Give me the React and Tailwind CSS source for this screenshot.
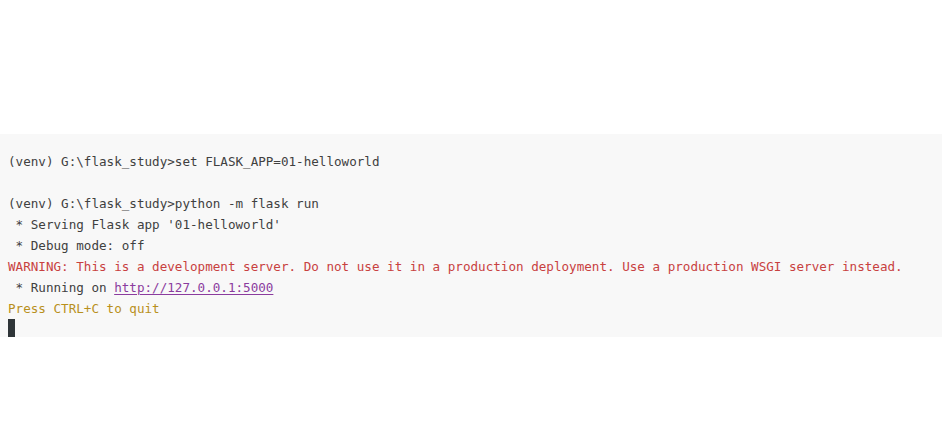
// Terminal output panel: Flask dev server log
export default function App() {
  return (
    <div className="min-h-screen w-[942px] bg-white pt-[134px]">
      <div
        className="bg-[#f8f8f8] pl-[8px] pt-[17px] h-[203px] overflow-hidden text-[12.6px] leading-[21px] text-[#404040] whitespace-pre"
        style={{ fontFamily: '"DejaVu Sans Mono", "Liberation Mono", monospace' }}
      >
        <div>(venv) G:\flask_study&gt;set FLASK_APP=01-helloworld</div>
        <div>&nbsp;</div>
        <div>(venv) G:\flask_study&gt;python -m flask run</div>
        <div> * Serving Flask app '01-helloworld'</div>
        <div> * Debug mode: off</div>
        <div className="text-[#c8413f]">
          WARNING: This is a development server. Do not use it in a production deployment. Use a production WSGI server instead.
        </div>
        <div>
          {" * Running on "}
          <span className="text-[#8b3c9e] underline underline-offset-2">http://127.0.0.1:5000</span>
        </div>
        <div className="text-[#b8901c]">Press CTRL+C to quit</div>
        <div className="w-[7px] h-[18px] bg-[#2f3538]" />
      </div>
    </div>
  );
}
